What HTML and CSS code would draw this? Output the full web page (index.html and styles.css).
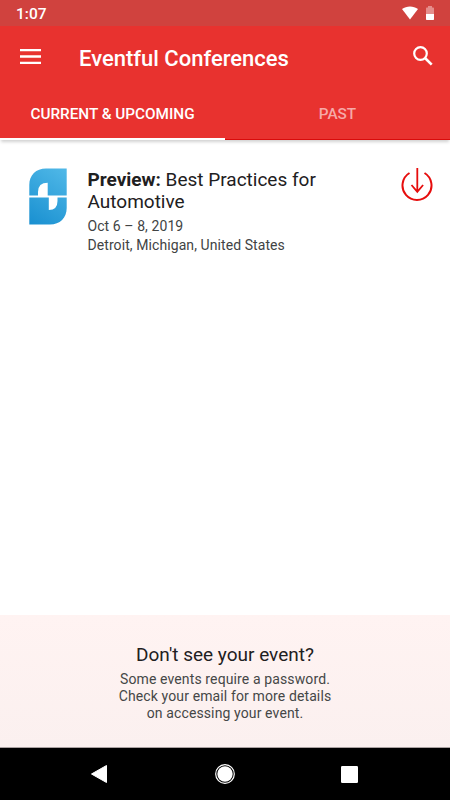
FILE: index.html
```html
<!DOCTYPE html>
<html lang="en">
<head>
  <meta charset="UTF-8" />
  <title>Eventful Conferences</title>
  <link rel="stylesheet" href="styles.css">
</head>
<body>

  <div class="status-bar">
    <span class="clock">1:07</span>
    <svg class="wifi" width="18" height="16" viewBox="0 0 18 16">
      <path d="M9 14.4 L1 4.1 C5.5 0.5 12.5 0.5 17 4.1 Z" fill="#fff" />
    </svg>
    <svg class="battery" width="10" height="16" viewBox="0 0 10 16">
      <path d="M3 1h4v1.5h1.3q.7 0 .7.7v5.8H1V3.2q0-.7.7-.7H3z" fill="#e58d8b" />
      <path d="M1 9h8v5.3q0 .7-.7.7H1.7q-.7 0-.7-.7z" fill="#fff" />
    </svg>
  </div>

  <header class="app-bar">
    <svg class="menu-icon" width="21" height="15" viewBox="0 0 21 15">
      <path d="M0 1.2h21M0 7.5h21M0 13.8h21" stroke="#fff" stroke-width="2.3" />
    </svg>
    <h1>Eventful Conferences</h1>
    <svg class="search-icon" width="20" height="20" viewBox="0 0 20 20" fill="none" stroke="#fff">
      <circle cx="7.5" cy="7.5" r="6.3" stroke-width="2.2" />
      <path d="M12 12l6.7 6.7" stroke-width="2.6" />
    </svg>
  </header>

  <nav class="tabs">
    <a class="tab active">CURRENT &amp; UPCOMING</a>
    <a class="tab">PAST</a>
  </nav>

  <main class="events">
    <article class="event">
      <svg class="event-logo" width="38" height="57" viewBox="0 0 38 57">
        <defs>
          <linearGradient id="logoFill" x1="0" y1="57" x2="38" y2="0" gradientUnits="userSpaceOnUse">
            <stop offset="0" stop-color="#188fd0" />
            <stop offset="1" stop-color="#51b9e8" />
          </linearGradient>
        </defs>
        <g fill="url(#logoFill)">
          <path d="M.3 27.5V17C.3 7 7 .5 17 .5H37.7V27.5H18.7V14.7Q9 14.7 9 24V27.5Z" />
          <path d="M.3 29.5H19.8V42Q28.5 42 28.5 33V29.5H37.7V40C37.7 50 31 56.5 21 56.5H.3Z" />
        </g>
      </svg>
      <div class="event-info">
        <h2><b>Preview:</b> Best Practices for<br>Automotive</h2>
        <p>Oct 6 – 8, 2019</p>
        <p>Detroit, Michigan, United States</p>
      </div>
      <svg class="download-icon" width="32" height="34" viewBox="0 0 32 34" fill="none" stroke="#e60d0d">
        <path d="M8.5 5A14.5 14.5 0 1 0 23.5 5" stroke-width="2" />
        <path d="M16.3 0V23.5M10.5 17l5.8 6.8 5.8-6.8" stroke-width="1.8" />
      </svg>
    </article>
  </main>

  <footer class="event-help">
    <h3>Don't see your event?</h3>
    <p>Some events require a password.<br>Check your email for more details<br>on accessing your event.</p>
  </footer>

  <div class="nav-bar">
    <svg width="16" height="18" viewBox="0 0 16 18">
      <path d="M.5 9L15.5 .5v17z" fill="#fff" stroke="#fff" stroke-linejoin="round" />
    </svg>
    <svg class="home" width="20" height="20" viewBox="0 0 20 20">
      <circle cx="10" cy="10" r="9.3" fill="none" stroke="#fff" stroke-width="1.2" />
      <circle cx="10" cy="10" r="7.7" fill="#fff" />
    </svg>
    <svg width="17" height="17" viewBox="0 0 17 17">
      <rect width="17" height="17" rx="1.3" fill="#fff" />
    </svg>
  </div>

</body>
</html>
```
FILE: styles.css
```css
* {
  box-sizing: border-box;
}
body {
  margin: 0;
  height: 800px;
  display: flex;
  flex-direction: column;
  background-color: #fff;
  color: #1e2021;
  font-family: Roboto, sans-serif;
  overflow: hidden;
}
h1, h2, h3, p {
  margin: 0;
}
svg {
  display: block;
  flex-shrink: 0;
}

/* Top bars */
.status-bar {
  height: 26px;
  padding: 0 15px 0 16px;
  display: flex;
  align-items: center;
  background-color: #d0423e;
}
.clock {
  flex-grow: 1;
  color: #fff;
  font-size: 15.5px;
  font-weight: 500;
  line-height: 26px;
  padding-top: 2px;
}
.wifi {
  margin-right: 6px;
}
.app-bar {
  height: 64px;
  padding: 0 17px 0 20px;
  display: flex;
  align-items: center;
  background-color: #e8322f;
}
.app-bar h1 {
  flex-grow: 1;
  margin-left: 38px;
  color: #fff;
  font-size: 22px;
  font-weight: 500;
}
.menu-icon {
  margin-bottom: 3px;
}
.search-icon {
  margin-bottom: 4px;
}
.tabs {
  height: 50px;
  display: flex;
  background-color: #e8322f;
  box-shadow: 0 3px 3px -1px rgba(0, 0, 0, 0.18);
}
.tab {
  width: 50%;
  border-bottom: 1px solid #d90b0b;
  color: #f6a9a8;
  font-size: 15.3px;
  font-weight: 500;
  line-height: 49px;
  text-align: center;
}
.tab.active {
  border-bottom: 2px solid #fff;
  color: #fff;
}

/* Event list */
.events {
  flex-grow: 1;
}
.event {
  display: flex;
  align-items: flex-start;
  padding: 28px 17px 0 29px;
}
.event-info {
  flex-grow: 1;
  margin-left: 20.5px;
}
.event-info h2 {
  font-size: 19px;
  font-weight: 400;
  line-height: 22px;
  margin: 1px 0 4px;
}
.event-info b {
  font-weight: 700;
}
.event-info p {
  color: #414344;
  font-size: 14px;
  letter-spacing: 0.08px;
  line-height: 19px;
}

/* Help panel */
.event-help {
  height: 133px;
  padding-top: 28px;
  background: linear-gradient(#fff3f2, #fbf0ef);
  border-bottom: 1px solid #aaa1a1;
  text-align: center;
}
.event-help h3 {
  font-size: 19px;
  font-weight: 400;
  line-height: 24px;
  margin-bottom: 4px;
}
.event-help p {
  color: #454747;
  font-size: 14px;
  letter-spacing: 0.12px;
  line-height: 17px;
}

.nav-bar {
  height: 52px;
  padding: 0 92px 0 91px;
  display: flex;
  align-items: center;
  justify-content: space-between;
  background-color: #000;
}
.home {
  margin-left: 1px;
}
```
